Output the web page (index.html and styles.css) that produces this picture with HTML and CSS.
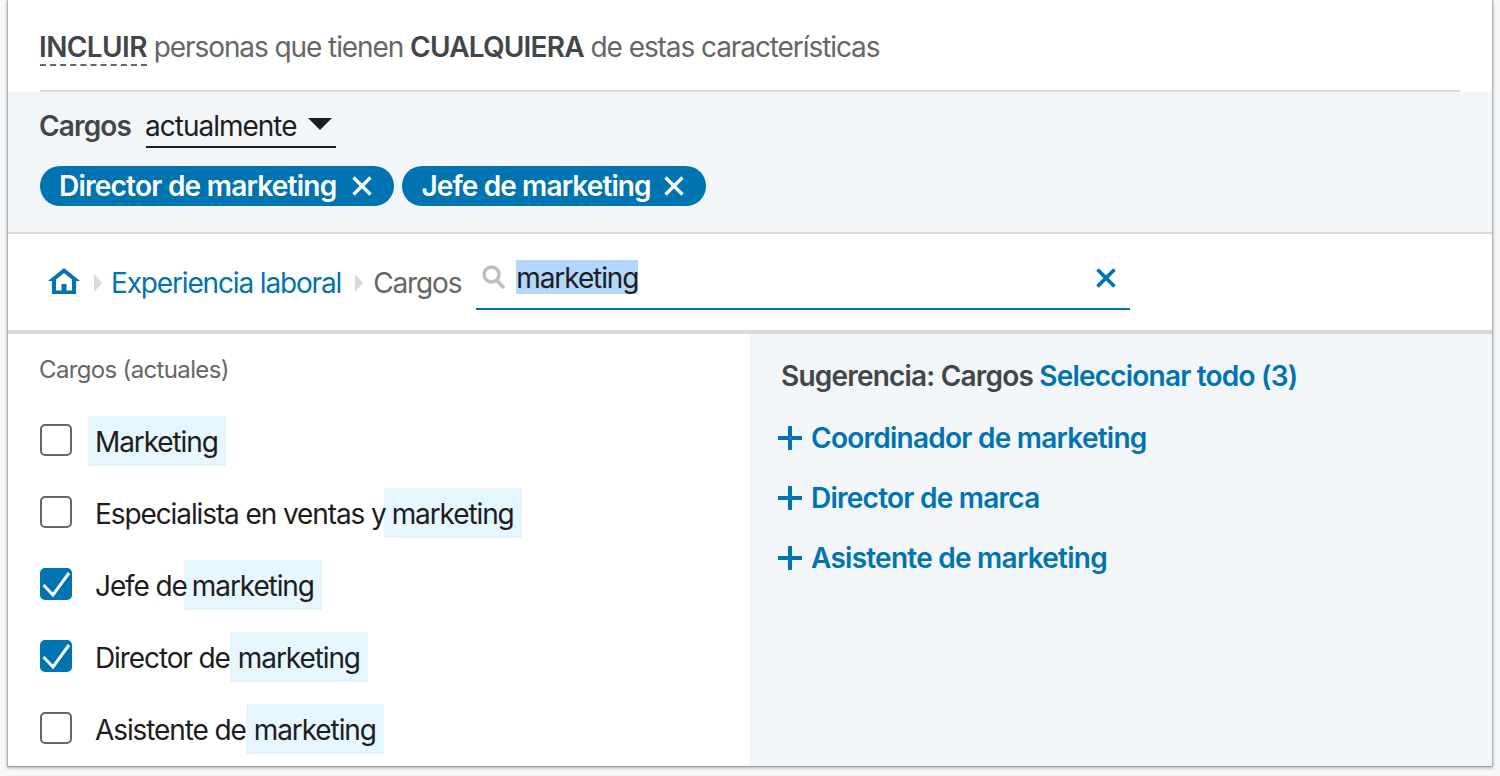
FILE: index.html
```html
<!DOCTYPE html>
<html lang="es">
<head>
<meta charset="utf-8">
<title>Incluir personas</title>
<link rel="stylesheet" href="styles.css">
</head>
<body>
<main class="panel">
  <header class="head">
    <h2 class="head-title"><span class="incl">INCLUIR</span> personas que tienen <b>CUALQUIERA</b> de estas características</h2>
  </header>
  <section class="filters">
    <div class="filter-row">
      <span class="filter-label">Cargos</span>
      <span class="select">actualmente<svg class="caret" width="24" height="12" viewBox="0 0 24 12"><path d="M0 0H24L12 12Z"/></svg></span>
    </div>
    <div class="chips">
      <span class="chip">Director de marketing<svg class="chip-x" width="20" height="20" viewBox="0 0 20 20"><path d="M1.5 1.5L18.5 18.5M18.5 1.5L1.5 18.5"/></svg></span>
      <span class="chip chip-short">Jefe de marketing<svg class="chip-x" width="20" height="20" viewBox="0 0 20 20"><path d="M1.5 1.5L18.5 18.5M18.5 1.5L1.5 18.5"/></svg></span>
    </div>
  </section>
  <nav class="crumbs">
    <svg class="home" width="32" height="26" viewBox="0 0 32 26"><path fill-rule="evenodd" fill="#0073b1" d="M16 0L32 13H28V26H4V13H0ZM16 5L8 11.500V22.500H13.500V16H18.500V22.500H24V11.500Z"/></svg>
    <svg class="sep" width="8" height="18" viewBox="0 0 8 18"><path d="M0 0L8 9L0 18Z"/></svg>
    <a class="crumb-link">Experiencia laboral</a>
    <svg class="sep" width="8" height="18" viewBox="0 0 8 18"><path d="M0 0L8 9L0 18Z"/></svg>
    <span class="crumb">Cargos</span>
    <div class="search">
      <svg class="glass" width="24" height="24" viewBox="0 0 24 24"><circle cx="9.500" cy="9.500" r="7.500" /><path d="M15 15.500L22 23"/></svg>
      <span class="query">marketing</span>
      <svg class="clear" width="20" height="20" viewBox="0 0 20 20"><path d="M1.500 1.500L18.500 18.500M18.500 1.500L1.500 18.500"/></svg>
    </div>
  </nav>
  <div class="columns">
    <section class="results">
      <h3 class="results-title">Cargos (actuales)</h3>
      <ul class="list">
        <li class="item"><span class="box"></span><span class="label label-first"><mark class="hl hl-first">Marketing</mark></span></li>
        <li class="item"><span class="box"></span><span class="label">Especialista en ventas y<mark class="hl hl-pull2">marketing</mark></span></li>
        <li class="item"><span class="box on"><svg width="32" height="32" viewBox="0 0 32 32"><path d="M3.500 17L13 27L29 5"/></svg></span><span class="label">Jefe de<mark class="hl hl-pull3">marketing</mark></span></li>
        <li class="item"><span class="box on"><svg width="32" height="32" viewBox="0 0 32 32"><path d="M3.500 17L13 27L29 5"/></svg></span><span class="label">Director de<mark class="hl">marketing</mark></span></li>
        <li class="item"><span class="box"></span><span class="label">Asistente de<mark class="hl">marketing</mark></span></li>
      </ul>
    </section>
    <aside class="suggest">
      <p class="suggest-title">Sugerencia: Cargos <a class="select-all">Seleccionar todo (3)</a></p>
      <ul class="sugg-list">
        <li class="sugg"><svg width="24" height="24" viewBox="0 0 24 24"><path d="M0 12H24M12 0V24"/></svg>Coordinador de marketing</li>
        <li class="sugg"><svg width="24" height="24" viewBox="0 0 24 24"><path d="M0 12H24M12 0V24"/></svg>Director de marca</li>
        <li class="sugg"><svg width="24" height="24" viewBox="0 0 24 24"><path d="M0 12H24M12 0V24"/></svg>Asistente de marketing</li>
      </ul>
    </aside>
  </div>
</main>
</body>
</html>
```

FILE: styles.css
```css
* { box-sizing: border-box; }
html, body { margin: 0; height: 776px; overflow: hidden; }
body {
  background: #f5f7f9;
  font-family: Inter, "Liberation Sans", sans-serif;
  padding: 0 8px;
}
.panel {
  width: 1484px;
  height: 766px;
  background: #fff;
  display: flex;
  flex-direction: column;
  box-shadow: 0 0 0 1px rgba(0,0,0,.12), 0 1px 3px 1px rgba(0,0,0,.3);
  overflow: hidden;
}
.head {
  height: 92px;
  margin: 0 32px;
  border-bottom: 2px solid #d9d9d9;
  padding-top: 28px;
}
.head-title {
  margin: 0;
  font-size: 28px;
  line-height: 38px;
  letter-spacing: -1.08px;
  font-weight: 400;
  color: #666;
  white-space: nowrap;
}
.head-title b { font-weight: 600; color: #434649; letter-spacing: -.8px; }
.incl {
  font-weight: 600;
  color: #434649;
  display: inline-block;
  height: 38px;
  letter-spacing: -.6px;
  text-indent: -1px;
  border-bottom: 2px dashed #666;
}
.filters {
  height: 142px;
  background: #f3f6f8;
  border-bottom: 2px solid #d9d9d9;
  padding: 16px 32px 0;
}
.filter-row { display: flex; align-items: flex-start; height: 40px; }
.filter-label { font-size: 28px; line-height: 37px; letter-spacing: -.85px; text-indent: -1px; font-weight: 600; color: #434649; width: 106px; }
.select {
  width: 190px;
  height: 40px;
  font-size: 28px;
  line-height: 37px;
  letter-spacing: -1px;
  text-indent: -1px;
  color: #1d1d1d;
  border-bottom: 2px solid #1d1d1d;
  display: flex;
  align-items: flex-start;
}
.caret { margin: 10px 0 0 11px; fill: #1d1d1d; }
.chips { display: flex; gap: 8px; margin-top: 18px; }
.chip {
  height: 40px;
  border-radius: 20px;
  background: #0073b1;
  color: #fff;
  font-size: 28px;
  line-height: 40px;
  letter-spacing: -.76px;
  font-weight: 600;
  padding: 0 22px 0 19px;
  display: flex;
  align-items: center;
  gap: 16px;
}
.chip-short { letter-spacing: -.88px; gap: 13px; }
.chip-x { fill: none; stroke: #fff; stroke-width: 3.200; }
.crumbs {
  height: 100px;
  border-bottom: 4px solid #d9d9d9;
  padding: 0 0 0 40px;
  display: flex;
  align-items: flex-start;
}
.home { margin-top: 34px; flex: none; }
.sep { fill: #d9d9d9; margin: 40px 0 0 14px; flex: none; }
.crumb-link { margin: 29px 0 0 9px; font-size: 28px; line-height: 40px; letter-spacing: -1.15px; color: #0073b1; }
.crumb { margin: 29px 0 0 10px; font-size: 28px; line-height: 40px; letter-spacing: -1.15px; color: #666; }
.search {
  margin: 16px 0 0 15px;
  width: 654px;
  height: 60px;
  border-bottom: 2px solid #0073b1;
  display: flex;
  align-items: flex-start;
  position: relative;
}
.glass { margin: 15px 0 0 6px; fill: none; stroke: #bdbdbd; stroke-width: 3.500; flex: none; }
.query {
  margin: 10px 0 0 10px;
  height: 34px;
  background: #b3d7ff;
  color: #1d1d1d;
  font-size: 28px;
  line-height: 36px;
  letter-spacing: -1.1px;
}
.clear { position: absolute; top: 18px; right: 14px; fill: none; stroke: #0073b1; stroke-width: 3.800; }
.columns { flex: 1; display: flex; min-height: 0; }
.results { width: 742px; padding: 20px 0 0 32px; }
.results-title { margin: 0; font-size: 24px; line-height: 32px; letter-spacing: -.65px; text-indent: -1px; font-weight: 400; color: #666; }
.list { list-style: none; margin: 30px 0 0; padding: 0; }
.item { height: 72px; display: flex; align-items: flex-start; }
.box {
  width: 32px;
  height: 32px;
  margin-top: 8px;
  border: 2px solid #666;
  border-radius: 5px;
  flex: none;
  background: #fff;
}
.box.on { border: 0; background: #0073b1; }
.box svg { display: block; fill: none; stroke: #fff; stroke-width: 3; }
.label { margin-left: 23px; font-size: 28px; line-height: 50px; letter-spacing: -1.1px; color: #1d1d1d; white-space: nowrap; isolation: isolate; }
.label-first { margin-left: 16px; }
.hl {
  display: inline-block;
  position: relative;
  z-index: -1;
  background: #e6f6ff;
  color: inherit;
  padding: 0 8px;
  height: 50px;
  line-height: 52px;
}
.hl-first { padding-left: 7px; }
.hl-pull2 { margin-left: -2px; }
.hl-pull3 { margin-left: -3px; }
.suggest { flex: 1; background: #f3f6f8; padding: 24px 0 0 31px; }
.suggest-title { margin: 0; font-size: 28px; line-height: 36px; letter-spacing: -.8px; font-weight: 600; color: #434649; }
.select-all { color: #0073b1; }
.sugg-list { list-style: none; margin: 26px 0 0 -3px; padding: 0; }
.sugg {
  height: 60px;
  display: flex;
  align-items: flex-start;
  font-size: 28px;
  line-height: 36px;
  letter-spacing: -.75px;
  font-weight: 600;
  color: #0073b1;
  gap: 9px;
}
.sugg svg { margin-top: 6px; flex: none; fill: none; stroke: #0073b1; stroke-width: 4; }
```
